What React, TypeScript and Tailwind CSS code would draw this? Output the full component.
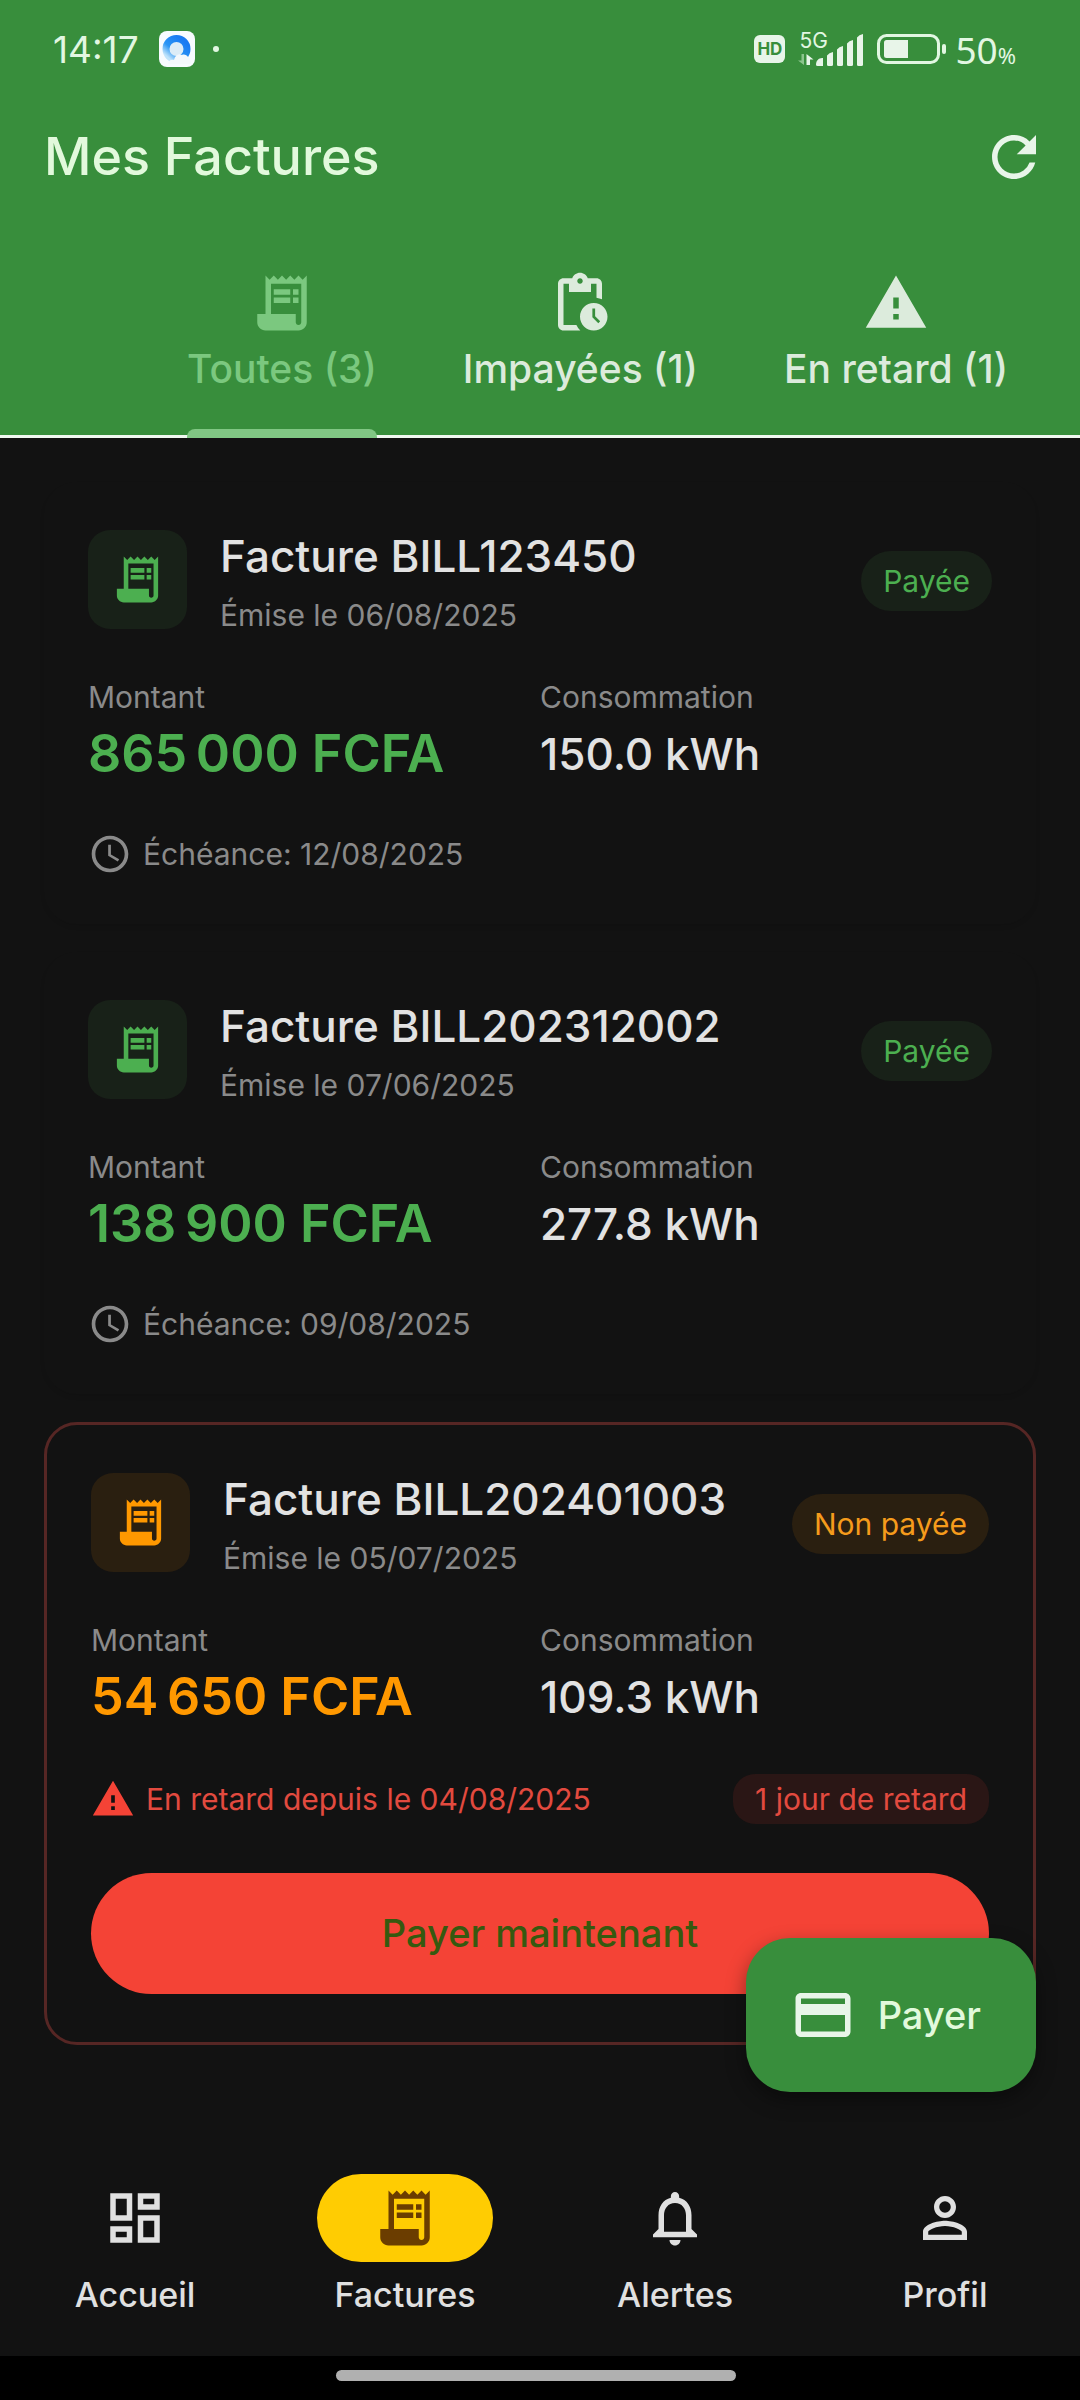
import {
  MdCreditCard,
  MdNotificationsNone,
  MdOutlineDashboard,
  MdPendingActions,
  MdPersonOutline,
  MdReceiptLong,
  MdRefresh,
  MdSchedule,
  MdWarning,
} from "react-icons/md";

type Invoice = {
  id: string;
  issued: string;
  amount: string;
  usage: string;
  due: string;
  late?: string;
};

const invoices: Invoice[] = [
  { id: "BILL123450", issued: "06/08/2025", amount: "865\u2009000 FCFA", usage: "150.0 kWh", due: "12/08/2025" },
  { id: "BILL202312002", issued: "07/06/2025", amount: "138\u2009900 FCFA", usage: "277.8 kWh", due: "09/08/2025" },
  {
    id: "BILL202401003",
    issued: "05/07/2025",
    amount: "54\u2009650 FCFA",
    usage: "109.3 kWh",
    due: "04/08/2025",
    late: "1 jour de retard",
  },
];

const tabs = [
  { label: "Toutes (3)", Icon: MdReceiptLong, active: true },
  { label: "Impayées (1)", Icon: MdPendingActions, active: false },
  { label: "En retard (1)", Icon: MdWarning, active: false },
];

const navItems = [
  { label: "Accueil", Icon: MdOutlineDashboard, active: false },
  { label: "Factures", Icon: MdReceiptLong, active: true },
  { label: "Alertes", Icon: MdNotificationsNone, active: false },
  { label: "Profil", Icon: MdPersonOutline, active: false },
];

function BrowserLogo() {
  return (
    <svg viewBox="0 0 36 36" className="ml-5 size-9" aria-hidden="true">
      <defs>
        <linearGradient id="ring" x1="0.8" y1="0.1" x2="0.1" y2="0.9">
          <stop offset="0" stopColor="#1a7bf2" />
          <stop offset="0.6" stopColor="#2a95f5" />
          <stop offset="1" stopColor="#bfe3fb" />
        </linearGradient>
      </defs>
      <rect width="36" height="36" rx="8" fill="#f7fbff" />
      <circle cx="17.500" cy="18" r="10.500" fill="#dcecf7" stroke="url(#ring)" strokeWidth="7" />
      <path d="M9 33c0-3 3-5 6-4 1-5 5-7 8-5 2-1 5 0 6 2 2 0 3 4 3 7z" fill="#f4f8fc" />
    </svg>
  );
}

function Signal() {
  return (
    <div className="relative ml-3 h-9 w-[68px]">
      <span className="absolute top-0 left-0.5 text-[21px] leading-5">5G</span>
      <svg viewBox="0 0 68 36" className="h-9 w-[68px]" aria-hidden="true">
        <path d="M7 23v11l-6-4.500h3.500V23z" fill="#8cc48d" />
        <path d="M9.500 34V23l7 5.500H13V34z" fill="#e8f5e9" />
        <g fill="#e8f5e9">
          <path d="M19 33.500c0-4 3-7 7-6.500v8h-5.500q-1.500 0-1.500-1.500z" />
          <path d="M30 24.500q2-3 6-3.500v12.500q0 1.500-1.500 1.500h-3q-1.500 0-1.500-1.500z" />
          <path d="M40 18.500q2-3 6-3.500v18.500q0 1.500-1.500 1.500h-3q-1.500 0-1.500-1.500z" />
          <path d="M50 12.500q2-3 6-3.500v24.500q0 1.500-1.500 1.500h-3q-1.500 0-1.500-1.500z" />
          <path d="M60 6.500q2-3 6-3.500v30.500q0 1.500-1.500 1.500h-3q-1.500 0-1.500-1.500z" />
        </g>
      </svg>
    </div>
  );
}

function Battery() {
  return (
    <svg viewBox="0 0 70 30" className="ml-3 h-[30px] w-[70px]" aria-hidden="true">
      <rect x="1.500" y="1.500" width="60" height="27" rx="8" fill="none" stroke="#e2f7e2" strokeWidth="3" />
      <path d="M9.500 6H31v18H9.500Q7 24 7 21.500v-13Q7 6 9.500 6z" fill="#e8f5e9" />
      <rect x="65" y="10" width="4" height="10" rx="2" fill="#e2f7e2" />
    </svg>
  );
}

function StatusBar() {
  return (
    <div className="flex h-[98px] items-center pr-16 pl-[53px] text-[#e2f7e2]">
      <time className="text-[37px] leading-none">14:17</time>
      <BrowserLogo />
      <span className="ml-[18px] size-1.5 rounded-full bg-[#e2f7e2]" />
      <span className="ml-auto flex h-7 w-[31px] items-center justify-center rounded-md bg-[#e8f5e9] text-[17px] leading-none font-bold text-[#388e3c]">
        HD
      </span>
      <Signal />
      <Battery />
      <span className="ml-2 flex items-baseline font-['Noto_Sans',sans-serif] text-[37px] leading-none">
        50<span className="text-[22px]">%</span>
      </span>
    </div>
  );
}

function InvoiceCard({ invoice }: { invoice: Invoice }) {
  const late = invoice.late !== undefined;
  return (
    <article
      className={
        late
          ? "rounded-[33px] border-3 border-[#562624] px-11 py-12"
          : "rounded-[33px] px-11 py-12 shadow-[0_3px_4px_rgba(0,0,0,0.08)]"
      }
    >
      <div className="flex items-start">
        <span
          className={
            late
              ? "flex size-[99px] items-center justify-center rounded-[22px] bg-[#2a1f10] text-[#ff9800]"
              : "flex size-[99px] items-center justify-center rounded-[22px] bg-[#182118] text-[#4caf50]"
          }
        >
          <MdReceiptLong className="size-[55px]" />
        </span>
        <div className="ml-[33px]">
          <h2 className="text-[44px] leading-[52px] font-medium text-[#e2e2e2]">Facture {invoice.id}</h2>
          <p className="mt-4 text-[30px] leading-[34px] text-[#8a8a8a]">Émise le {invoice.issued}</p>
        </div>
        <span
          className={
            late
              ? "ml-auto self-center rounded-full bg-[#2a1f10] px-[22px] text-[30px] leading-[60px] text-[#f59b1c]"
              : "ml-auto self-center rounded-full bg-[#182118] px-[22px] text-[30px] leading-[60px] text-[#4caf50]"
          }
        >
          {late ? "Non payée" : "Payée"}
        </span>
      </div>

      <dl className="mt-[45px] grid grid-cols-2">
        <div>
          <dt className="text-[30px] leading-10 text-[#8a8a8a]">Montant</dt>
          <dd
            className={
              late
                ? "mt-1 text-[52px] leading-[66px] font-semibold text-[#ff9800]"
                : "mt-1 text-[52px] leading-[66px] font-semibold text-[#4caf50]"
            }
          >
            {invoice.amount}
          </dd>
        </div>
        <div>
          <dt className="text-[30px] leading-10 text-[#8a8a8a]">Consommation</dt>
          <dd className="mt-1 text-[44px] leading-[66px] font-medium text-[#e2e2e2]">{invoice.usage}</dd>
        </div>
      </dl>

      {late ? (
        <>
          <div className="mt-11 flex items-center text-[30px] leading-[50px] text-[#e24a3f]">
            <MdWarning className="size-11 text-[#f44336]" />
            <span className="ml-[11px]">En retard depuis le {invoice.due}</span>
            <span className="ml-auto rounded-[22px] bg-[#2a1615] px-[22px]">{invoice.late}</span>
          </div>
          <button
            type="button"
            className="mt-[49px] h-[121px] w-full rounded-full bg-[#f44336] text-[38px] font-medium text-[#36590f]"
          >
            Payer maintenant
          </button>
        </>
      ) : (
        <p className="mt-[45px] flex items-center text-[30px] leading-[44px] text-[#8a8a8a]">
          <MdSchedule className="size-11" />
          <span className="ml-[11px]">Échéance: {invoice.due}</span>
        </p>
      )}
    </article>
  );
}

export default function App() {
  return (
    <div className="flex min-h-screen flex-col bg-[#121212] font-['Inter',sans-serif]">
      <header className="bg-[#388e3c]">
        <StatusBar />
        <div className="flex h-[118px] items-center justify-between pr-[33px] pl-11">
          <h1 className="text-[52px] leading-none font-medium text-[#e2f9dc]">Mes Factures</h1>
          <button type="button" aria-label="Actualiser" className="text-[#e8f5e9]">
            <MdRefresh className="size-[66px]" />
          </button>
        </div>
        <div role="tablist" className="flex h-[222px] border-b-3 border-[#f1f8f1] pl-36">
          {tabs.map(({ label, Icon, active }) => (
            <button
              key={label}
              type="button"
              role="tab"
              aria-selected={active}
              className={
                active
                  ? "relative flex flex-col items-center px-[43px] pt-[54px] text-[#7bc87f]"
                  : "flex flex-col items-center px-[43px] pt-[54px] text-[#dcebdc]"
              }
            >
              <Icon className="size-[66px]" />
              <span className="mt-[5px] text-[39px] leading-[56px] font-medium whitespace-nowrap">{label}</span>
              {active && (
                <span className="absolute inset-x-[43px] -bottom-[3px] h-[9px] rounded-t-lg bg-[#81c784]" />
              )}
            </button>
          ))}
        </div>
      </header>

      <main className="relative flex flex-1 flex-col gap-7 px-11 pt-11">
        {invoices.map((invoice) => (
          <InvoiceCard key={invoice.id} invoice={invoice} />
        ))}
        <button
          type="button"
          className="absolute right-11 bottom-11 flex h-[154px] items-center rounded-[44px] bg-[#388e3c] pr-[55px] pl-11 text-[38px] font-medium text-[#e2f9dc] shadow-[0_8px_20px_rgba(0,0,0,0.4)]"
        >
          <MdCreditCard className="size-[66px] text-[#e8f5e9]" />
          <span className="ml-[22px]">Payer</span>
        </button>
      </main>

      <nav className="flex h-[220px] pt-[38px]">
        {navItems.map(({ label, Icon, active }) => (
          <a key={label} href="#" aria-current={active ? "page" : undefined} className="flex flex-1 flex-col items-center">
            <span
              className={
                active
                  ? "flex h-[88px] w-44 items-center justify-center rounded-full bg-[#ffcc02] text-[#6b3d00]"
                  : "flex h-[88px] w-44 items-center justify-center text-[#e0e0e0]"
              }
            >
              <Icon className="size-[66px]" />
            </span>
            <span className="mt-[11px] text-[34px] leading-[44px] font-medium text-[#e0e0e0]">{label}</span>
          </a>
        ))}
      </nav>
      <div className="flex h-11 items-start justify-center bg-black pt-3.5">
        <span className="mr-2 h-[11px] w-[37%] rounded-full bg-[#b0b0b0]" />
      </div>
    </div>
  );
}
